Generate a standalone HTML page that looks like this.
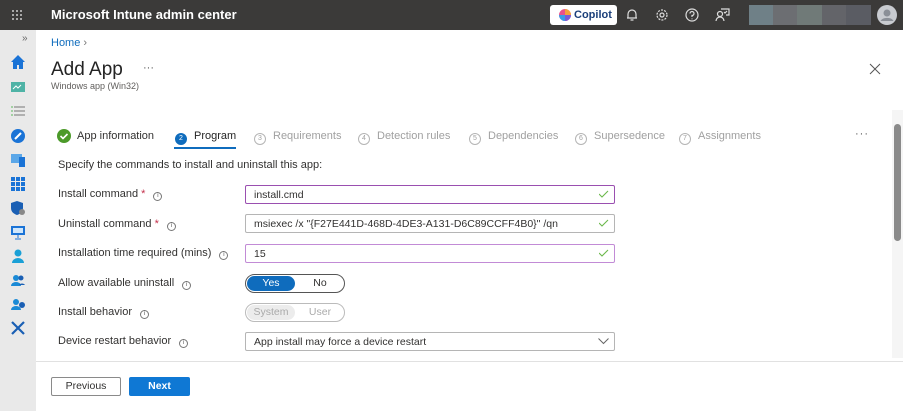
<!DOCTYPE html>
<html><head><meta charset="utf-8"><style>
*{box-sizing:border-box;margin:0;padding:0}
body{width:903px;height:411px;overflow:hidden;font-family:"Segoe UI","Liberation Sans",sans-serif;background:#fff;position:relative;color:#323130}
.a{position:absolute}
.hdr{left:0;top:0;width:903px;height:30px;background:#3b3a39}
.side{left:0;top:30px;width:36px;height:381px;background:#e9e9e9}
.lbl{font-size:11px;color:#323130;left:58px}
.inp{left:245px;width:370px;height:19px;border:1px solid #b5b5b5;border-radius:2px;font-size:10.5px;padding:3px 8px;line-height:13px}
.pur{border-color:#9a4fb0}
.chk{right:5px;top:4px}
.info{display:inline-block;width:9px;height:9px;border:1px solid #777;border-radius:50%;font-size:6px;text-align:center;line-height:7px;margin-left:8px;vertical-align:0px;color:#555}
.tab{top:130px;font-size:11px;color:#a0a0a0;white-space:nowrap}
.num{display:inline-block;width:12px;height:12px;border:1px solid #b5b5b5;border-radius:50%;font-size:7px;text-align:center;line-height:10px;margin-right:7px;vertical-align:-1px;color:#a0a0a0}
.ic{left:10px;width:16px;height:16px}
</style></head><body>
<div class="a hdr"></div>
<svg class="a" style="left:11px;top:9px" width="12" height="12"><g fill="#ccc"><circle cx="2" cy="2" r="1"/><circle cx="6" cy="2" r="1"/><circle cx="10" cy="2" r="1"/><circle cx="2" cy="6" r="1"/><circle cx="6" cy="6" r="1"/><circle cx="10" cy="6" r="1"/><circle cx="2" cy="10" r="1"/><circle cx="6" cy="10" r="1"/><circle cx="10" cy="10" r="1"/></g></svg>
<div class="a" style="left:51px;top:7px;font-size:13px;font-weight:bold;color:#fff">Microsoft Intune admin center</div>
<div class="a" style="left:550px;top:5px;width:67px;height:20px;background:#fff;border-radius:3px;font-size:11px;font-weight:bold;color:#1b3f7a;padding-left:24px;line-height:20px">Copilot</div>
<svg class="a" style="left:559px;top:9px" width="12" height="12"><path d="M6 0a6 6 0 1 0 .01 0z" fill="#e8508d"/><path d="M0 6a6 6 0 0 0 6 6V6z" fill="#3a9be8"/><path d="M6 0a6 6 0 0 1 6 6H6z" fill="#f3a23c"/><path d="M12 6a6 6 0 0 1-6 6V6z" fill="#7b5bd6"/></svg>
<svg class="a" style="left:625px;top:8px" width="14" height="14" fill="none" stroke="#ddd" stroke-width="1.2"><path d="M3 10V6a4 4 0 0 1 8 0v4h1H2zM5.5 12h3"/></svg>
<svg class="a" style="left:655px;top:8px" width="14" height="14" fill="none" stroke="#ddd" stroke-width="1.2"><circle cx="7" cy="7" r="2"/><circle cx="7" cy="7" r="5" stroke-dasharray="2 1.2"/></svg>
<svg class="a" style="left:685px;top:8px" width="14" height="14" fill="none" stroke="#ddd" stroke-width="1.2"><circle cx="7" cy="7" r="6"/><path d="M5 5.5a2 2 0 1 1 2 2v1.5M7 10.5v.8"/></svg>
<svg class="a" style="left:715px;top:7px" width="15" height="15" fill="none" stroke="#ddd" stroke-width="1.2"><circle cx="5" cy="7" r="2.5"/><path d="M1 14a4 4 0 0 1 8 0M6 2h8v6h-3M9 5l1 1 2-2"/></svg>
<div class="a" style="left:749px;top:5px;width:24px;height:20px;background:#6f8087"></div>
<div class="a" style="left:773px;top:5px;width:24px;height:20px;background:#6c6e72"></div>
<div class="a" style="left:797px;top:5px;width:25px;height:20px;background:#707a78"></div>
<div class="a" style="left:822px;top:5px;width:24px;height:20px;background:#636469"></div>
<div class="a" style="left:846px;top:5px;width:25px;height:20px;background:#5a5c63"></div>
<svg class="a" style="left:877px;top:5px" width="20" height="20"><circle cx="10" cy="10" r="10" fill="#c8cbd0"/><circle cx="10" cy="8" r="3.5" fill="#8a8f97"/><path d="M3.5 16a7 5 0 0 1 13 0" fill="#8a8f97"/></svg>
<div class="a side"></div>
<div class="a" style="left:22px;top:33px;font-size:10px;color:#666">»</div>
<svg class="a ic" style="top:54px"><path d="M8 1L1 8h2v7h4v-4h2v4h4V8h2z" fill="#1a73d6"/></svg>
<svg class="a ic" style="top:79px"><rect x="1" y="3" width="14" height="10" fill="#4fb3a6"/><path d="M3 10l3-3 2 2 3-3" stroke="#fff" fill="none"/></svg>
<svg class="a ic" style="top:103px" stroke="#777"><path d="M4 4h11M4 8h11M4 12h11"/><path d="M1 4h2M1 8h2M1 12h2" stroke="#5cb85c"/></svg>
<svg class="a ic" style="top:128px"><circle cx="8" cy="8" r="7" fill="#1a73d6"/><path d="M5 11l6-6" stroke="#fff" stroke-width="2"/></svg>
<svg class="a ic" style="top:152px"><rect x="1" y="2" width="11" height="9" fill="#5ba7e8"/><rect x="9" y="5" width="6" height="10" fill="#1a73d6"/></svg>
<svg class="a ic" style="top:176px" fill="#1a73d6"><rect x="1" y="1" width="4" height="4"/><rect x="6" y="1" width="4" height="4"/><rect x="11" y="1" width="4" height="4"/><rect x="1" y="6" width="4" height="4"/><rect x="6" y="6" width="4" height="4"/><rect x="11" y="6" width="4" height="4"/><rect x="1" y="11" width="4" height="4"/><rect x="6" y="11" width="4" height="4"/><rect x="11" y="11" width="4" height="4"/></svg>
<svg class="a ic" style="top:200px"><path d="M7 1l6 2v5c0 4-3 6-6 7-3-1-6-3-6-7V3z" fill="#1a5fb4"/><circle cx="12" cy="12" r="3" fill="#888"/></svg>
<svg class="a ic" style="top:224px"><rect x="1" y="2" width="14" height="9" fill="#1a73d6"/><rect x="3" y="4" width="10" height="5" fill="#cfe6fb"/><path d="M8 11v3M5 15h6" stroke="#1a73d6"/></svg>
<svg class="a ic" style="top:248px" fill="#1aa0d6"><circle cx="8" cy="5" r="3.5"/><path d="M2 15a6 5 0 0 1 12 0z"/></svg>
<svg class="a ic" style="top:272px" fill="#1a8ad6"><circle cx="6" cy="6" r="3"/><path d="M1 14a5 4 0 0 1 10 0z"/><circle cx="11" cy="6" r="2.5" fill="#1a5fb4"/><path d="M9 13a3.5 3 0 0 1 6 0z" fill="#1a5fb4"/></svg>
<svg class="a ic" style="top:296px" fill="#1a8ad6"><circle cx="6" cy="6" r="3"/><path d="M1 14a5 4 0 0 1 10 0z"/><circle cx="12" cy="9" r="3" fill="#1a5fb4"/></svg>
<svg class="a ic" style="top:320px" stroke="#1a5fb4" stroke-width="2.2"><path d="M2 2l12 12M14 2L2 14"/></svg>
<div class="a" style="left:51px;top:37px;font-size:11px;color:#0f6cbd">Home <span style="color:#777">›</span></div>
<div class="a" style="left:51px;top:59px;font-size:19px;color:#242424">Add App</div>
<div class="a" style="left:143px;top:62px;font-size:11px;color:#555">···</div>
<div class="a" style="left:51px;top:81px;font-size:9px;color:#605e5c">Windows app (Win32)</div>
<svg class="a" style="left:869px;top:63px" width="12" height="12" stroke="#555"><path d="M1 1l10 10M11 1L1 11"/></svg>
<svg class="a" style="left:57px;top:129px" width="14" height="14"><circle cx="7" cy="7" r="7" fill="#4c9a2a"/><path d="M3.5 7l2.5 2.5 4.5-4.5" stroke="#fff" stroke-width="1.6" fill="none"/></svg>
<div class="a tab" style="left:77px;color:#323130">App information</div>
<div class="a tab" style="left:175px;color:#242424"><span class="num" style="background:#0f6cbd;border-color:#0f6cbd;color:#fff">2</span>Program</div>
<div class="a" style="left:174px;top:147px;width:62px;height:2px;background:#0f6cbd"></div>
<div class="a tab" style="left:254px"><span class="num">3</span>Requirements</div>
<div class="a tab" style="left:358px"><span class="num">4</span>Detection rules</div>
<div class="a tab" style="left:469px"><span class="num">5</span>Dependencies</div>
<div class="a tab" style="left:575px"><span class="num">6</span>Supersedence</div>
<div class="a tab" style="left:679px"><span class="num">7</span>Assignments</div>
<div class="a" style="left:855px;top:128px;font-size:11px;color:#555;letter-spacing:1px">···</div>
<div class="a" style="left:892px;top:110px;width:11px;height:248px;background:#f5f5f5"></div>
<div class="a" style="left:894px;top:124px;width:7px;height:117px;background:#8a8a8a;border-radius:4px"></div>
<div class="a" style="left:58px;top:159px;font-size:11px">Specify the commands to install and uninstall this app:</div>
<div class="a lbl" style="top:188px">Install command <span style="color:#c4314b">*</span><span class="info">i</span></div>
<div class="a lbl" style="top:218px">Uninstall command <span style="color:#c4314b">*</span><span class="info">i</span></div>
<div class="a lbl" style="top:247px">Installation time required (mins)<span class="info">i</span></div>
<div class="a lbl" style="top:277px">Allow available uninstall<span class="info">i</span></div>
<div class="a lbl" style="top:306px">Install behavior<span class="info">i</span></div>
<div class="a lbl" style="top:335px">Device restart behavior<span class="info">i</span></div>
<svg width="0" height="0" style="position:absolute"><defs><path id="ck" d="M0 4l3 3 6-6" stroke="#6bb84a" fill="none" stroke-width="1.1"/></defs></svg>
<div class="a inp pur" style="top:185px">install.cmd<svg class="a chk" width="10" height="9"><use href="#ck"/></svg></div>
<div class="a inp" style="top:214px">msiexec /x "{F27E441D-468D-4DE3-A131-D6C89CCFF4B0}" /qn<svg class="a chk" width="10" height="9"><use href="#ck"/></svg></div>
<div class="a inp pur" style="top:244px;border-color:#c28bd6">15<svg class="a chk" width="10" height="9"><use href="#ck"/></svg></div>
<div class="a" style="left:245px;top:274px;width:100px;height:19px;border:1px solid #555;border-radius:10px"></div>
<div class="a" style="left:247px;top:276px;width:48px;height:15px;background:#0f6cbd;border-radius:8px;color:#fff;font-size:10.5px;text-align:center;line-height:15px">Yes</div>
<div class="a" style="left:297px;top:276px;width:46px;font-size:10.5px;text-align:center;line-height:15px">No</div>
<div class="a" style="left:245px;top:303px;width:100px;height:19px;border:1px solid #bbb;border-radius:10px"></div>
<div class="a" style="left:247px;top:305px;width:48px;height:15px;background:#ececec;border-radius:8px;color:#aaa;font-size:10.5px;text-align:center;line-height:15px">System</div>
<div class="a" style="left:297px;top:305px;width:46px;font-size:10.5px;text-align:center;line-height:15px;color:#aaa">User</div>
<div class="a inp" style="top:332px">App install may force a device restart<svg class="a" style="right:5px;top:5px" width="11" height="7" stroke="#666" fill="none"><path d="M0.5 0.5l5 5 5-5"/></svg></div>
<div class="a" style="left:36px;top:361px;width:867px;height:1px;background:#e1e1e1"></div>
<div class="a" style="left:51px;top:377px;width:70px;height:19px;border:1px solid #8a8a8a;border-radius:2px;font-size:10.5px;text-align:center;line-height:17px">Previous</div>
<div class="a" style="left:129px;top:377px;width:61px;height:19px;background:#0f78d4;border-radius:2px;font-size:10.5px;font-weight:bold;color:#fff;text-align:center;line-height:19px">Next</div>
</body></html>
